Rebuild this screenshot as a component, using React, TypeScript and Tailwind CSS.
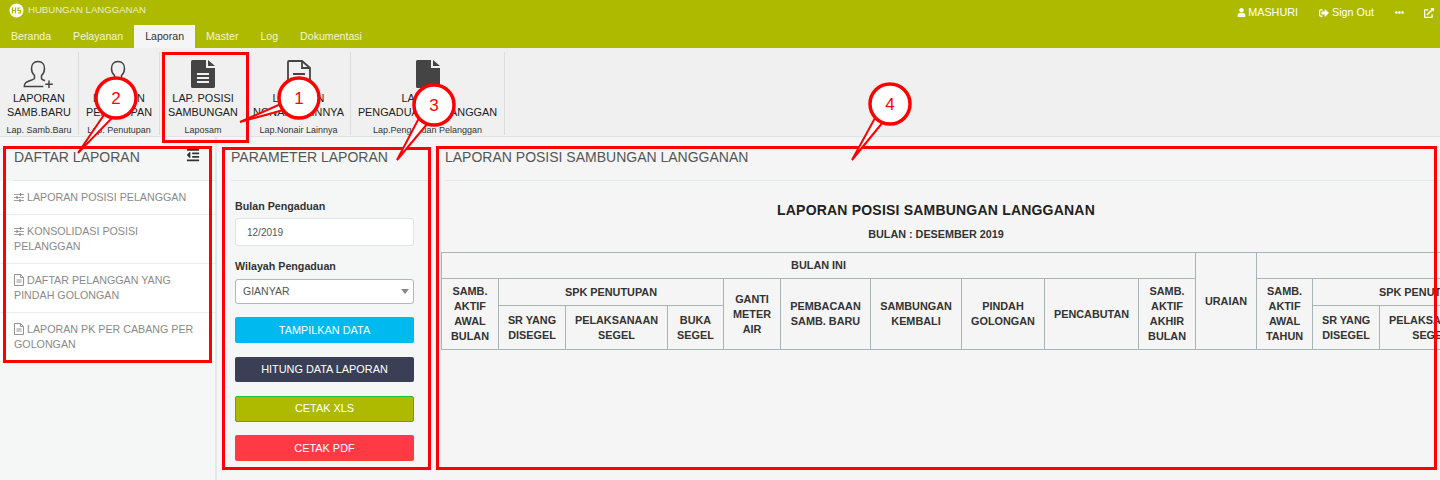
import { FaUser, FaSignOutAlt, FaEllipsisH, FaExternalLinkAlt, FaOutdent } from 'react-icons/fa';

const tabs = ['Beranda', 'Pelayanan', 'Laporan', 'Master', 'Log', 'Dokumentasi'];

function UserOutline({ plus }: { plus?: boolean }) {
  return (
    <svg width="32" height="30" viewBox="0 0 32 30" fill="none" stroke="#444" strokeWidth="1.500">
      <path d="M15 1.500c-4.200 0-6.500 3-6.500 7 0 3 1.300 5.500 3 7v3c0 1-7 2.500-9 4.500-1 1-1.200 2-1.200 3.500h19" />
      <path d="M15 1.500c4.200 0 6.500 3 6.500 7 0 3-1.300 5.500-3 7v3c0 .8 1.500 1.500 3.500 2.300" />
      {plus && <path d="M26 20.500v7.500M22.200 24.200h7.600" />}
    </svg>
  );
}

function FileSolid({ lines = true }: { lines?: boolean }) {
  return (
    <svg width="24" height="28" viewBox="0 0 24 28">
      <path fill="#444" d="M1.500 0H15v8h9v18.500a1.500 1.500 0 0 1-1.500 1.500h-21A1.500 1.500 0 0 1 0 26.500v-25A1.500 1.500 0 0 1 1.500 0z" />
      <path fill="#444" d="M17 0l7 6h-7z" />
      {lines && <path stroke="#f0f0f0" strokeWidth="2" d="M6 14h12M6 18h12M6 22h12" />}
    </svg>
  );
}

function FileOutline() {
  return (
    <svg width="24" height="28" viewBox="0 0 24 28" fill="none" stroke="#444" strokeWidth="1.800">
      <path d="M2 1h13l8 7v18a1 1 0 0 1-1 1H2a1 1 0 0 1-1-1V2a1 1 0 0 1 1-1z" />
      <path d="M15 1v7h8" />
      <path d="M6 14h12M6 18h12M6 22h12" />
    </svg>
  );
}

function SliderGlyph() {
  return (
    <svg className="inline-block mr-[3px] align-[-1px]" width="10" height="9" viewBox="0 0 10 9" fill="none" stroke="#888">
      <path d="M0 1.500h10M0 4.500h10M0 7.500h10" strokeWidth="0.800" />
      <path d="M6.500 0v3M3 3v3M6 6v3" strokeWidth="1.200" />
    </svg>
  );
}

function FileGlyph() {
  return (
    <svg className="inline-block mr-[3px] align-[-2px]" width="10" height="12" viewBox="0 0 10 12" fill="none" stroke="#888" strokeWidth="0.900">
      <path d="M1 .5h5.500L9.500 3.500v8h-9v-11z" />
      <path d="M6.500 .5v3h3M2.500 6h5M2.500 8h5" />
    </svg>
  );
}

function RibbonGroup({ icon, lines, caption, w }: { icon: React.ReactNode; lines: string[]; caption: string; w: string }) {
  return (
    <div className={`${w} h-[83px] mt-1 border-r border-[#dcdcdc] flex flex-col items-center`}>
      <div className="h-[39px] pt-2 flex items-start justify-center">{icon}</div>
      <div className="h-[28px] text-[10.850px] leading-[14px] text-[#222] text-center whitespace-nowrap">
        {lines.map((l) => (
          <div key={l}>{l}</div>
        ))}
      </div>
      <div className="mt-[6px] text-[9px] leading-[10px] text-[#333] whitespace-nowrap">{caption}</div>
    </div>
  );
}

function PanelHead({ title, children }: { title: string; children?: React.ReactNode }) {
  return (
    <div className="h-[44px] border-b border-[#e3e9ea] flex items-start justify-between pt-[11px] pr-[15px] text-[14px] leading-[18px] text-[#555]">
      <span>{title}</span>
      {children}
    </div>
  );
}

function SideItem({ kind, children }: { kind: 'slider' | 'file'; children: string }) {
  return (
    <div className="px-[14px] py-[9px] border-b border-[#ebeeee] text-[10.700px] leading-[15px] text-[#8a8a8a]">
      {kind === 'slider' ? <SliderGlyph /> : <FileGlyph />}
      {children}
    </div>
  );
}

function Btn({ className, children }: { className: string; children: string }) {
  return (
    <div className={`w-[179px] flex items-center justify-center rounded-[2px] text-[10.900px] text-white ${className}`}>
      {children}
    </div>
  );
}

const th = 'border border-[#a9b5b5] p-0 text-center align-middle font-bold text-[#333] leading-[15px]';
const colWidths = [57, 67, 102, 56, 57, 90, 91, 83, 94, 57, 61, 56, 67, 102, 56];

function Callout({ cx, cy, base, tip, label }: { cx: number; cy: number; base: string; tip: string; label: string }) {
  return (
    <g>
      <polygon points={`${base} ${tip}`} fill="#fff" stroke="#f00" strokeWidth="2" />
      <circle cx={cx} cy={cy} r={20} fill="#fff" stroke="#f00" strokeWidth="3.500" />
      <text x={cx} y={cy + 6} textAnchor="middle" fontSize="17" fill="#f00">
        {label}
      </text>
    </g>
  );
}

export default function App() {
  return (
    <div className="relative w-[1440px] h-[480px] overflow-hidden bg-[#f5f7f7] font-['Liberation_Sans',sans-serif]">
      {/* top bar */}
      <div className="h-[48px] bg-[#aeba00] text-white">
        <div className="h-[25px] flex items-center pl-[9px]">
          <div className="flex items-center pb-1 text-[9.600px] text-[#eef2bb]">
            <svg width="15" height="15" viewBox="0 0 15 15">
              <circle cx="7.500" cy="7.500" r="7" fill="#fff" />
              <path d="M3.500 4.500v6M6.500 4.500v6M3.500 7.500h3M11.500 5H9v2.500h2.500V10H9" fill="none" stroke="#aeba00" strokeWidth="1.200" />
            </svg>
            <span className="ml-[4px]">HUBUNGAN LANGGANAN</span>
          </div>
          <div className="ml-auto flex items-center text-[10.800px]">
            <FaUser className="w-[9px] h-[9px]" />
            <span className="ml-[2px]">MASHURI</span>
            <FaSignOutAlt className="w-[10px] h-[10px] ml-[21px]" />
            <span className="ml-[3px]">Sign Out</span>
            <FaEllipsisH className="w-[9px] h-[9px] ml-[21px]" />
            <FaExternalLinkAlt className="w-[10px] h-[10px] ml-[20px] mr-[6px]" />
          </div>
        </div>
        <div className="h-[23px] flex text-[10.600px]">
          {tabs.map((t) => (
            <div
              key={t}
              className={
                t === 'Laporan'
                  ? 'h-[23px] px-[11px] flex items-center bg-[#f5f5f5] text-[#333]'
                  : 'h-[23px] px-[11px] flex items-center text-[#f4f6d0]'
              }
            >
              {t}
            </div>
          ))}
        </div>
      </div>

      {/* ribbon */}
      <div className="h-[89px] bg-[#f0f0f0] border-b border-[#dfe3e3] flex">
        <RibbonGroup w="w-[79px]" icon={<UserOutline plus />} lines={['LAPORAN', 'SAMB.BARU']} caption="Lap. Samb.Baru" />
        <RibbonGroup w="w-[81px]" icon={<UserOutline />} lines={['LAPORAN', 'PENUTUPAN']} caption="Lap. Penutupan" />
        <RibbonGroup w="w-[87px]" icon={<FileSolid />} lines={['LAP. POSISI', 'SAMBUNGAN']} caption="Laposam" />
        <RibbonGroup w="w-[104px]" icon={<FileOutline />} lines={['LAPORAN', 'NONAIR LAINNYA']} caption="Lap.Nonair Lainnya" />
        <RibbonGroup w="w-[154px]" icon={<FileSolid lines={false} />} lines={['LAPORAN', 'PENGADUAN PELANGGAN']} caption="Lap.Pengaduan Pelanggan" />
      </div>

      <div className="flex h-[343px]">
        {/* daftar laporan */}
        <div className="w-[217px] border-r-2 border-[#e3e9ea]">
          <div className="pl-[14px]">
            <PanelHead title="DAFTAR LAPORAN">
              <FaOutdent className="w-[14px] h-[14px] text-[#333]" />
            </PanelHead>
          </div>
          <div className="bg-white">
            <SideItem kind="slider">LAPORAN POSISI PELANGGAN</SideItem>
            <SideItem kind="slider">KONSOLIDASI POSISI PELANGGAN</SideItem>
            <SideItem kind="file">DAFTAR PELANGGAN YANG PINDAH GOLONGAN</SideItem>
            <SideItem kind="file">LAPORAN PK PER CABANG PER GOLONGAN</SideItem>
          </div>
        </div>

        {/* parameter */}
        <div className="w-[215px] shrink-0">
          <div className="pl-[14px]">
            <PanelHead title="PARAMETER LAPORAN" />
          </div>
          <div className="pl-[18px] flex flex-col">
            <div className="mt-[18px] text-[10.700px] leading-[14px] font-bold text-[#333]">Bulan Pengaduan</div>
            <div className="mt-[5px] w-[179px] h-[28px] bg-white border border-[#dfe3e6] rounded-[3px] flex items-center pl-[11px] text-[10px] text-[#555]">
              12/2019
            </div>
            <div className="mt-[13px] text-[10.700px] leading-[14px] font-bold text-[#333]">Wilayah Pengaduan</div>
            <div className="mt-[6px] w-[179px] h-[25px] bg-white border border-[#b5b5b5] rounded-[3px] flex items-center justify-between pl-[7px] pr-[4px] text-[10.500px] text-[#555]">
              GIANYAR
              <span className="w-0 h-0 border-x-[4px] border-x-transparent border-t-[5px] border-t-[#888]" />
            </div>
            <Btn className="mt-[13px] h-[26px] bg-[#00b9ee]">TAMPILKAN DATA</Btn>
            <Btn className="mt-[14px] h-[25px] bg-[#3a3f55]">HITUNG DATA LAPORAN</Btn>
            <Btn className="mt-[14px] h-[26px] pb-[2px] bg-[#aeba00] border border-[#1fc03f]">CETAK XLS</Btn>
            <Btn className="mt-[13px] h-[26px] bg-[#ff3a44]">CETAK PDF</Btn>
          </div>
        </div>

        {/* laporan */}
        <div className="flex-1 min-w-0 bg-[#f5f5f5] overflow-hidden">
          <div className="pl-[13px]">
            <PanelHead title="LAPORAN POSISI SAMBUNGAN LANGGANAN" />
          </div>
          <div className="pl-[9px]">
            <div className="w-[990px] mt-[20px] text-center">
              <div className="text-[14px] leading-[18px] font-bold text-[#222] tracking-[0.2px]">LAPORAN POSISI SAMBUNGAN LANGGANAN</div>
              <div className="mt-[8px] text-[10.800px] leading-[14px] font-bold text-[#333]">BULAN : DESEMBER 2019</div>
            </div>
            <table className="mt-[11px] table-fixed border-collapse text-[10.850px] w-[1096px]">
              <colgroup>
                {colWidths.map((w, i) => (
                  <col key={i} style={{ width: w }} />
                ))}
              </colgroup>
              <thead>
                <tr className="h-[26px]">
                  <th className={th} colSpan={10}>BULAN INI</th>
                  <th className={th} rowSpan={3}>URAIAN</th>
                  <th className={th} colSpan={4}></th>
                </tr>
                <tr className="h-[27px]">
                  <th className={th} rowSpan={2}>SAMB.<br />AKTIF<br />AWAL<br />BULAN</th>
                  <th className={th} colSpan={3}>SPK PENUTUPAN</th>
                  <th className={th} rowSpan={2}>GANTI<br />METER<br />AIR</th>
                  <th className={th} rowSpan={2}>PEMBACAAN<br />SAMB. BARU</th>
                  <th className={th} rowSpan={2}>SAMBUNGAN<br />KEMBALI</th>
                  <th className={th} rowSpan={2}>PINDAH<br />GOLONGAN</th>
                  <th className={th} rowSpan={2}>PENCABUTAN</th>
                  <th className={th} rowSpan={2}>SAMB.<br />AKTIF<br />AKHIR<br />BULAN</th>
                  <th className={th} rowSpan={2}>SAMB.<br />AKTIF<br />AWAL<br />TAHUN</th>
                  <th className={th} colSpan={3}>SPK PENUTUPAN</th>
                </tr>
                <tr className="h-[44px]">
                  <th className={th}>SR YANG<br />DISEGEL</th>
                  <th className={th}>PELAKSANAAN<br />SEGEL</th>
                  <th className={th}>BUKA<br />SEGEL</th>
                  <th className={th}>SR YANG<br />DISEGEL</th>
                  <th className={th}>PELAKSANAAN<br />SEGEL</th>
                  <th className={th}>BUKA<br />SEGEL</th>
                </tr>
              </thead>
            </table>
          </div>
        </div>
      </div>

      {/* annotasi merah di atas halaman */}
      <svg className="absolute inset-0 pointer-events-none font-['Liberation_Sans',sans-serif]" width="1440" height="480" fill="none">
        <g stroke="#f00" strokeWidth="3">
          <rect x="163.500" y="53.500" width="84" height="88" />
          <rect x="4.500" y="147.500" width="206" height="214" />
          <rect x="223.500" y="148.500" width="206" height="320" />
          <rect x="437.500" y="147.500" width="998" height="321" />
        </g>
        <Callout cx={299} cy={98} base="283,103 287,109" tip="240,122" label="1" />
        <Callout cx={116} cy={98} base="106,112 113,117" tip="78,153" label="2" />
        <Callout cx={434} cy={105} base="419,118 428,123" tip="397,160" label="3" />
        <Callout cx={890} cy={104} base="875,118 883,122" tip="852,160" label="4" />
      </svg>
    </div>
  );
}
